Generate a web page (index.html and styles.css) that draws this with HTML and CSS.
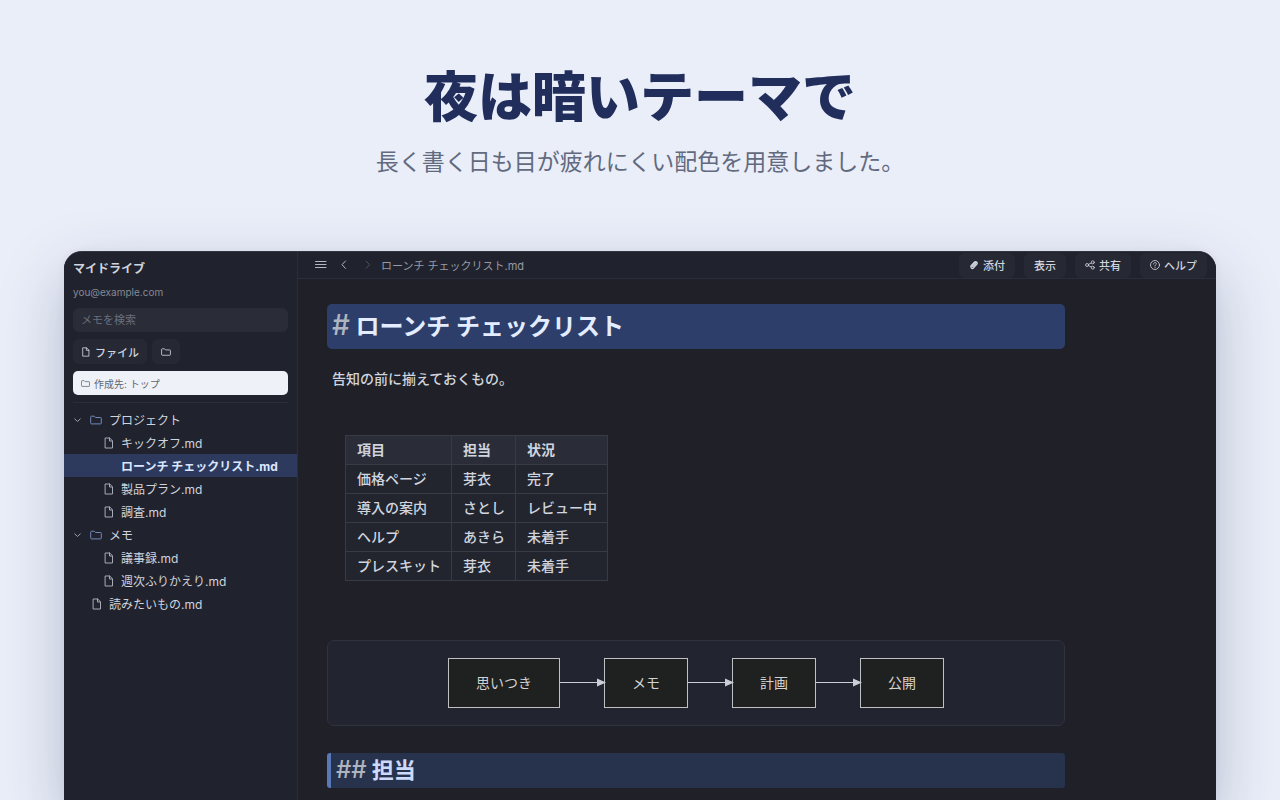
FILE: index.html
```html
<!DOCTYPE html>
<html lang="ja">

<head>
  <meta charset="UTF-8">
  <meta content="width=device-width, initial-scale=1.0" name="viewport">
  <title>夜は暗いテーマで</title>
  <link rel="stylesheet" href="styles.css">
</head>

<body>

<!-- shared icons -->
<svg class="sprite" aria-hidden="true">
  <symbol id="icon-file" viewBox="0 0 12 12">
    <path d="M2.500 1h4.200l2.800 2.800V11h-7z M6.500 1v3h3"/>
  </symbol>
  <symbol id="icon-folder" viewBox="0 0 12 12">
    <path d="M.7 2.900q0-.7.7-.7h2.900l1.200 1.300h5.100q.7 0 .7.7v5q0 .7-.7.7H1.400q-.7 0-.7-.7z"/>
  </symbol>
  <symbol id="icon-down" viewBox="0 0 12 12">
    <path d="M3 4.800 6 7.600l3-2.800"/>
  </symbol>
</svg>

<header class="hero">
  <h1>夜は暗いテーマで</h1>
  <p>長く書く日も目が疲れにくい配色を用意しました。</p>
</header>

<div class="window">
  <aside class="sidebar">
    <div class="sidebar-head">
      <h2>マイドライブ</h2>
      <p class="account">you@example.com</p>
      <input aria-label="メモを検索" class="search" placeholder="メモを検索" type="search">
      <div class="new-buttons">
        <button class="btn" type="button">
          <svg class="icon"><use href="#icon-file"/></svg>ファイル
        </button>
        <button aria-label="フォルダ" class="btn btn-folder" type="button">
          <svg class="icon"><use href="#icon-folder"/></svg>
        </button>
      </div>
      <button class="target" type="button">
        <svg class="icon"><use href="#icon-folder"/></svg>作成先: トップ
      </button>
    </div>

    <nav class="tree">
      <a class="row folder" href="#">
        <svg class="icon chevron"><use href="#icon-down"/></svg>
        <svg class="icon blue"><use href="#icon-folder"/></svg>プロジェクト
      </a>
      <a class="row child" href="#"><svg class="icon"><use href="#icon-file"/></svg>キックオフ.md</a>
      <a class="row child active" href="#"><span class="icon"></span>ローンチ チェックリスト.md</a>
      <a class="row child" href="#"><svg class="icon"><use href="#icon-file"/></svg>製品プラン.md</a>
      <a class="row child" href="#"><svg class="icon"><use href="#icon-file"/></svg>調査.md</a>
      <a class="row folder" href="#">
        <svg class="icon chevron"><use href="#icon-down"/></svg>
        <svg class="icon blue"><use href="#icon-folder"/></svg>メモ
      </a>
      <a class="row child" href="#"><svg class="icon"><use href="#icon-file"/></svg>議事録.md</a>
      <a class="row child" href="#"><svg class="icon"><use href="#icon-file"/></svg>週次ふりかえり.md</a>
      <a class="row" href="#"><svg class="icon"><use href="#icon-file"/></svg>読みたいもの.md</a>
    </nav>
  </aside>

  <main class="editor">
    <div class="topbar">
      <button aria-label="メニュー" class="nav-btn" type="button">
        <svg class="icon" viewBox="0 0 12 12"><path d="M.5 2.500h10.500M.5 5.500h10.500M.5 8.500h10.500"/></svg>
      </button>
      <button aria-label="戻る" class="nav-btn" type="button">
        <svg class="icon" viewBox="0 0 12 12"><path d="M7.500 2 4 5.700l3.500 3.700"/></svg>
      </button>
      <button aria-label="進む" class="nav-btn" disabled type="button">
        <svg class="icon" viewBox="0 0 12 12"><path d="m5 2 3.500 3.700L5 9.400"/></svg>
      </button>
      <span class="filename">ローンチ チェックリスト.md</span>
      <div class="actions">
        <button class="btn" type="button">
          <svg class="icon" viewBox="0 0 12 12"><path class="clip" d="M2 7.300 6.600 2.400a2 2 0 0 1 3 2.600L5.300 9.700a1.600 1.600 0 0 1-2.500-2.200L7 3.100a.8.8 0 0 1 1.200 1.100L4.300 8.400"/></svg>添付
        </button>
        <button class="btn" type="button">表示</button>
        <button class="btn" type="button">
          <svg class="icon" viewBox="0 0 12 12"><circle cx="2.500" cy="6" r="1.800"/><circle cx="9.300" cy="2.800" r="1.800"/><circle cx="9.300" cy="9.200" r="1.800"/><path d="m4.200 5.200 3.400-1.600M4.200 6.800l3.400 1.600"/></svg>共有
        </button>
        <button class="btn" type="button">
          <svg class="icon" viewBox="0 0 12 12"><circle cx="6" cy="6" r="5.400"/><path d="M4.300 4.800C4.400 2.400 7.700 2.500 7.700 4.600 7.700 5.700 6 5.700 6 7M6 8.700v.3"/></svg>ヘルプ
        </button>
      </div>
    </div>

    <article class="note">
      <h2 class="title"><span class="mark">#</span> ローンチ チェックリスト</h2>
      <p class="lead">告知の前に揃えておくもの。</p>

      <table>
        <thead>
          <tr><th>項目</th><th>担当</th><th>状況</th></tr>
        </thead>
        <tbody>
          <tr><td>価格ページ</td><td>芽衣</td><td>完了</td></tr>
          <tr><td>導入の案内</td><td>さとし</td><td>レビュー中</td></tr>
          <tr><td>ヘルプ</td><td>あきら</td><td>未着手</td></tr>
          <tr><td>プレスキット</td><td>芽衣</td><td>未着手</td></tr>
        </tbody>
      </table>

      <div class="diagram">
        <div class="node">思いつき</div>
        <svg class="arrow" viewBox="0 0 46 10"><path d="M0 4.500h40"/><path class="tip" d="M37 .5v8l9-4z"/></svg>
        <div class="node">メモ</div>
        <svg class="arrow" viewBox="0 0 46 10"><path d="M0 4.500h40"/><path class="tip" d="M37 .5v8l9-4z"/></svg>
        <div class="node">計画</div>
        <svg class="arrow" viewBox="0 0 46 10"><path d="M0 4.500h40"/><path class="tip" d="M37 .5v8l9-4z"/></svg>
        <div class="node">公開</div>
      </div>

      <h3 class="section"><span class="mark">##</span> 担当</h3>
    </article>
  </main>
</div>

</body>
</html>
```
FILE: styles.css
```css
* {
  margin: 0;
  padding: 0;
  box-sizing: border-box;
}

:root {
  --navy: #212e5c;
  --sidebar: #20232d;
  --editor: #1f2028;
  --button: #262934;
  --line: #2b2e38;
  --text: #d0d4de;
  --muted: #858995;
  --blue: #2d3e6b;
}

body {
  height: 100vh;
  overflow: hidden;
  display: flex;
  flex-direction: column;
  background: #eaeef9;
  color: var(--text);
  font-family: Inter, "Noto Sans CJK JP", sans-serif;
  font-size: 12px;
}

button,
input {
  border: none;
  font: inherit;
  color: inherit;
}

a {
  color: inherit;
  text-decoration: none;
}

.sprite {
  display: none;
}

.icon {
  width: 12px;
  height: 12px;
  flex: none;
  fill: none;
  stroke: currentColor;
  stroke-width: 1;
  stroke-linecap: round;
  stroke-linejoin: round;
}

/* hero */
.hero {
  padding-top: 62px;
  height: 251px;
  flex: none;
  text-align: center;
}

.hero h1 {
  color: var(--navy);
  font-size: 54px;
  font-weight: 800;
  line-height: 72px;
}

.hero p {
  margin-top: 10px;
  color: #626a80;
  font-size: 23px;
  line-height: 36px;
}

/* app window */
.window {
  flex: 1;
  min-height: 0;
  margin: 0 64px;
  display: flex;
  overflow: hidden;
  border-top: 1px solid #343741;
  border-radius: 18px 18px 0 0;
  background: var(--editor);
  box-shadow: 0 24px 64px rgba(30, 46, 80, 0.26), 0 2px 10px rgba(30, 46, 80, 0.06);
}

.sidebar {
  width: 234px;
  flex: none;
  border-right: 1px solid var(--line);
  background: var(--sidebar);
}

.sidebar-head {
  margin: 0 9px;
  padding: 8px 0 7px;
  border-bottom: 1px solid var(--line);
}

.sidebar h2 {
  font-size: 12px;
  line-height: 18px;
}

.account {
  margin-top: 6px;
  color: var(--muted);
  font-size: 10px;
  line-height: 16px;
}

.search {
  display: block;
  width: 100%;
  height: 24px;
  margin-top: 8px;
  padding: 0 8px;
  border-radius: 6px;
  background: #2a2c37;
  font-size: 11px;
}

.search::placeholder {
  color: #6b6f7a;
}

.new-buttons {
  display: flex;
  gap: 5px;
  margin: 7px 0;
}

.btn {
  display: flex;
  align-items: center;
  gap: 4px;
  height: 25px;
  padding: 0 8px;
  border-radius: 6px;
  background: var(--button);
  font-size: 11px;
  font-weight: 500;
}

.btn .icon {
  width: 10px;
  height: 10px;
}

.btn-folder {
  padding: 0 9px;
}

.target {
  display: flex;
  align-items: center;
  gap: 4px;
  width: 100%;
  height: 24px;
  padding: 0 8px;
  border-radius: 5px;
  background: #eef1f7;
  color: #62666e;
  font-size: 10px;
}

.target .icon {
  width: 9px;
  height: 9px;
}

.tree {
  padding-top: 5px;
}

.row {
  display: flex;
  align-items: center;
  gap: 6px;
  height: 23px;
  padding-left: 27px;
}

.row .icon {
  color: #a7abb6;
}

.folder {
  gap: 7px;
  padding-left: 8px;
}

.child {
  padding-left: 39px;
}

.row .chevron {
  width: 11px;
}

.row .blue {
  color: #7189b9;
}

.active {
  background: #2d3a5d;
  color: #dce7ff;
  font-weight: 700;
}

/* editor */
.editor {
  flex: 1;
  min-width: 0;
}

.topbar {
  display: flex;
  align-items: center;
  height: 27px;
  padding: 0 9px 0 11px;
  border-bottom: 1px solid var(--line);
  background: var(--sidebar);
}

.nav-btn {
  display: flex;
  justify-content: center;
  width: 23px;
  background: none;
  color: #b4b8c2;
}

.nav-btn:disabled {
  color: #50545f;
}

.filename {
  margin-left: 3px;
  color: #969aa5;
  font-size: 11px;
}

.actions {
  display: flex;
  gap: 9px;
  margin-left: auto;
}

.actions .btn {
  padding: 0 10px;
}

.clip {
  stroke-width: 1.4;
}

.note {
  max-width: 795px;
  padding: 25px 28px 25px 29px;
}

.title {
  padding: 0 5px;
  border-radius: 5px;
  background: var(--blue);
  color: #e3edff;
  font-size: 24px;
  line-height: 45px;
}

.mark {
  color: #aeb5bf;
  font-weight: 500;
}

.title .mark {
  font-size: 28px;
  line-height: 1;
}

.lead {
  margin: 18px 5px 0;
  font-size: 14px;
  font-weight: 500;
  line-height: 24px;
}

table {
  margin: 44px 0 59px 18px;
  border-collapse: collapse;
  background: #22252e;
  font-size: 14px;
  line-height: 20px;
}

th,
td {
  padding: 4px 10px 4px 11px;
  border: 1px solid #383b45;
  font-weight: 500;
  text-align: left;
}

th {
  background: #2a2d38;
  font-weight: 600;
}

.diagram {
  display: flex;
  align-items: center;
  justify-content: center;
  padding: 17px;
  border: 1px solid #30333e;
  border-radius: 7px;
  background: #22252f;
}

.node {
  padding: 0 27px;
  border: 1px solid #bfc0c3;
  background: #1f2020;
  color: #d2d2d2;
  font-size: 14px;
  line-height: 48px;
}

.arrow {
  width: 46px;
  height: 10px;
  margin-right: -2px;
  z-index: 1;
  fill: none;
  stroke: #ccced6;
}

.tip {
  fill: #ccced6;
  stroke: none;
}

.section {
  margin-top: 27px;
  padding: 0 5px;
  border-left: 4px solid #5878b8;
  border-radius: 3px;
  background: #27324d;
  color: #cddafa;
  font-size: 22px;
  line-height: 35px;
}

.section .mark {
  font-size: 24px;
  line-height: 1;
}
```
